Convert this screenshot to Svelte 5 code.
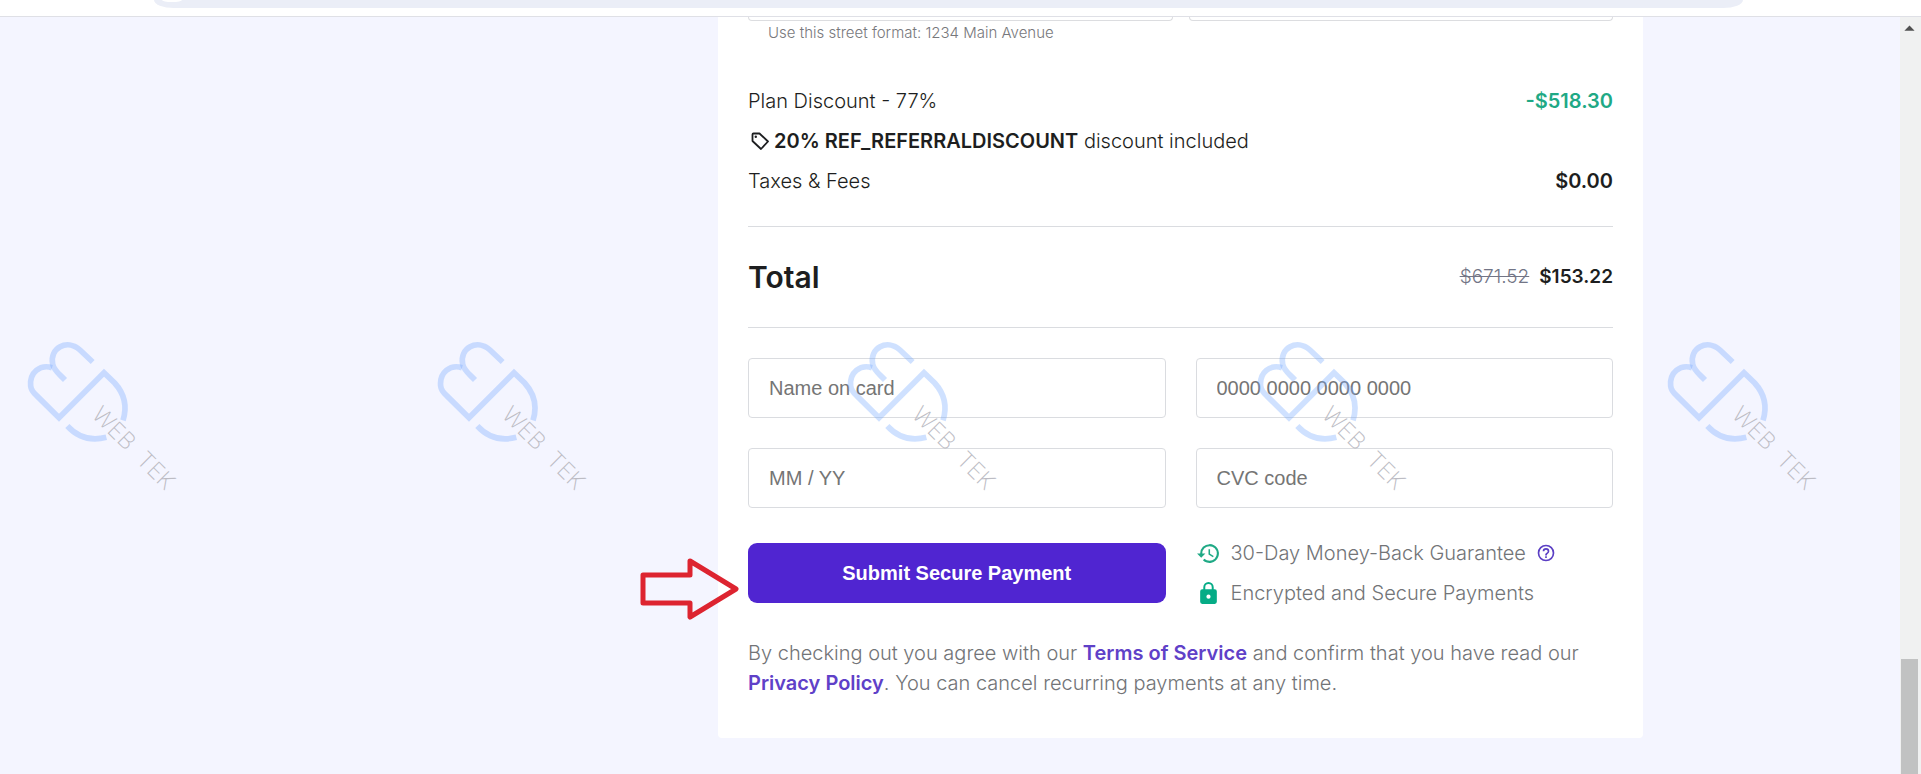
<script>
  const marks = [0, 1, 2, 3, 4];
</script>

<div class="window">
  <div class="toolbar"><div class="address"></div></div>
  <div class="viewport">
    <main class="page">
      <section class="card">
        <div class="street">
          <div class="clipped"></div>
          <div class="clipped"></div>
        </div>
        <p class="hint">Use this street format: 1234 Main Avenue</p>

        <div class="summary">
          <div class="row"><span>Plan Discount - 77%</span><strong class="saving">-$518.30</strong></div>
          <div class="row">
            <span class="coupon">
              <svg class="tag" viewBox="0 0 22 20" aria-hidden="true">
                <path d="M5.500 2.500H11.500L20 10.500 13 18 4.500 10V3.500Q4.500 2.500 5.500 2.500z" fill="none" stroke="#1d1e20" stroke-width="1.800" stroke-linejoin="round" />
                <circle cx="7.800" cy="5.800" r="1.200" fill="#1d1e20" />
              </svg>
              <span><strong>20% REF_REFERRALDISCOUNT</strong> discount included</span>
            </span>
          </div>
          <div class="row"><span>Taxes &amp; Fees</span><strong>$0.00</strong></div>
        </div>

        <div class="total">
          <h2>Total</h2>
          <div class="price"><s>$671.52</s><strong>$153.22</strong></div>
        </div>

        <form class="payment" onsubmit={(e) => e.preventDefault()}>
          <input aria-label="Name on card" placeholder="Name on card" />
          <input aria-label="Card number" placeholder="0000 0000 0000 0000" />
          <input aria-label="Expiry date" placeholder="MM / YY" />
          <input aria-label="CVC code" placeholder="CVC code" />
          <div class="submit">
            <button type="submit">Submit Secure Payment</button>
            <svg class="arrow" viewBox="0 0 100 62" aria-hidden="true">
              <path d="M3 17H50V3L96 31 50 59V45H3Z" fill="none" stroke="#dd2430" stroke-width="5" stroke-linejoin="round" />
            </svg>
          </div>
          <ul class="assurance">
            <li>
              <svg class="badge" viewBox="0 0 24 24" aria-hidden="true">
                <path fill="#1fa985" d="M13 3a9 9 0 0 0-9 9H1l4 4 4-4H6a7 7 0 1 1 7 7 7 7 0 0 1-4.940-2.060l-1.420 1.420A9 9 0 1 0 13 3zm-1 5v5l4.280 2.540.720-1.210-3.500-2.080V8H12z" />
              </svg>
              <span>30-Day Money-Back Guarantee</span>
              <svg class="help" viewBox="0 0 24 24" aria-hidden="true">
                <path fill="#5b3fc4" d="M11 18h2v-2h-2v2zm1-16a10 10 0 1 0 0 20 10 10 0 0 0 0-20zm0 18a8 8 0 1 1 0-16 8 8 0 0 1 0 16zm0-14a4 4 0 0 0-4 4h2a2 2 0 1 1 4 0c0 2-3 1.750-3 5h2c0-2.250 3-2.500 3-5a4 4 0 0 0-4-4z" />
              </svg>
            </li>
            <li>
              <svg class="badge" viewBox="0 0 24 24" aria-hidden="true">
                <path fill="#05ac86" d="M18 8h-1V6A5 5 0 0 0 7 6v2H6a2 2 0 0 0-2 2v10a2 2 0 0 0 2 2h12a2 2 0 0 0 2-2V10a2 2 0 0 0-2-2zM8.900 6a3.100 3.100 0 0 1 6.200 0v2H8.900z" />
                <circle cx="12" cy="15" r="2" fill="#fff" />
              </svg>
              <span>Encrypted and Secure Payments</span>
            </li>
          </ul>
        </form>

        <p class="terms">
          By checking out you agree with our <a href="#terms">Terms of Service</a> and confirm that you have read our
          <a href="#privacy">Privacy Policy</a>. You can cancel recurring payments at any time.
        </p>
      </section>
    </main>
    <div class="scrollbar">
      <svg viewBox="0 0 20 10" aria-hidden="true"><path d="M4 9 10 3l6 6z" fill="#505050" /></svg>
      <div class="thumb"></div>
    </div>
  </div>

  <div class="watermarks" aria-hidden="true">
    {#each marks as mark (mark)}
      <svg viewBox="0 0 600 570">
        <g fill="none" stroke="#72a6ff" stroke-opacity="0.34" stroke-width="17">
          <path d="M278 126 240 90C200 54 148 86 158 132C162 152 176 160 195 180" />
          <path d="M156 143C120 132 88 158 92 198C93 210 100 218 110 227L177 293 312 158 344 189C372 220 382 260 369 301" />
          <path d="M202 318C235 354 272 364 319 352" />
        </g>
        <g class="brand">
          <text transform="translate(272 288) rotate(45)">WEB</text>
          <text transform="translate(406 424) rotate(45)">TEK</text>
        </g>
      </svg>
    {/each}
  </div>
</div>

<style>
  :global(body) {
    margin: 0;
  }

  * {
    box-sizing: border-box;
  }

  .window {
    position: relative;
    display: flex;
    flex-direction: column;
    min-height: 100vh;
    overflow: hidden;
    background: #f4f5ff;
    color: #1d1e20;
    font: 300 20px/30px Inter, sans-serif;
  }

  .toolbar {
    height: 17px;
    padding: 0 178px 0 154px;
    background: #fff;
    border-bottom: 1px solid #dfe0e6;
  }

  .address {
    height: 8px;
    padding-left: 8px;
    border-radius: 0 0 20px 20px / 0 0 8px 8px;
    background: #ebeef7;
  }

  .address::before {
    content: "";
    display: block;
    width: 20px;
    height: 2px;
    border-radius: 0 0 10px 10px / 0 0 2px 2px;
    background: #fff;
  }

  .viewport {
    display: flex;
    flex: 1;
  }

  .page {
    display: grid;
    flex: 1;
    grid-template-columns: 718fr 925fr 257fr;
    align-items: start;
  }

  .card {
    grid-column: 2;
    padding: 0 30px 40px;
    border-radius: 0 0 4px 4px;
    background: #fff;
  }

  .street {
    display: grid;
    grid-template-columns: 1fr 1fr;
    gap: 16px;
  }

  .clipped {
    height: 4px;
    border: 1px solid #dcdde0;
    border-top: 0;
    border-radius: 0 0 4px 4px;
  }

  .hint {
    margin: 2px 0 0 20px;
    color: #77787c;
    font-size: 15px;
    line-height: 20px;
  }

  .summary {
    display: grid;
    gap: 10px;
    margin-top: 43px;
    padding-bottom: 30px;
    border-bottom: 1px solid #dadce0;
  }

  .row,
  .total {
    display: flex;
    align-items: center;
    justify-content: space-between;
  }

  strong {
    font-weight: 600;
  }

  .saving {
    color: #1fa985;
  }

  .coupon {
    display: flex;
    align-items: center;
    gap: 4px;
  }

  .tag {
    width: 22px;
    height: 20px;
  }

  .total {
    height: 101px;
    border-bottom: 1px solid #dadce0;
  }

  h2 {
    margin: 0;
    font-size: 30px;
    font-weight: 600;
  }

  .price {
    display: flex;
    gap: 10px;
    font-size: 19px;
  }

  s {
    color: #727586;
  }

  .payment {
    display: grid;
    grid-template-columns: 1fr 1fr;
    gap: 30px;
    margin-top: 30px;
  }

  input {
    width: 100%;
    min-width: 0;
    height: 60px;
    padding: 0 20px;
    border: 1px solid #dadce0;
    border-radius: 4px;
    background: #fff;
    font: 20px "Liberation Sans", sans-serif;
  }

  input::placeholder {
    color: #757575;
    opacity: 1;
  }

  .submit {
    position: relative;
    padding-top: 5px;
  }

  button {
    width: 100%;
    height: 60px;
    border: 0;
    border-radius: 9px;
    background: #5025d1;
    color: #fff;
    font: bold 20px "Liberation Sans", sans-serif;
  }

  .arrow {
    position: absolute;
    top: 20px;
    left: -108px;
    width: 100px;
    height: 62px;
  }

  .assurance {
    display: grid;
    align-content: start;
    gap: 10px;
    margin: 0;
    padding: 0;
    color: #727477;
    list-style: none;
  }

  li {
    display: flex;
    align-items: center;
    gap: 10px;
  }

  .badge {
    width: 25px;
    height: 25px;
  }

  .help {
    width: 20px;
    height: 20px;
  }

  .terms {
    margin: 30px 0 0;
    color: #727477;
  }

  a {
    color: #5f41c8;
    font-weight: 600;
    text-decoration: none;
  }

  .scrollbar {
    display: flex;
    flex-direction: column;
    justify-content: space-between;
    width: 21px;
    padding: 6px 3px 0 1px;
    background: #f0f1f1;
  }

  .thumb {
    height: 115px;
    background: #c1c2c2;
  }

  .watermarks {
    position: absolute;
    top: 320px;
    left: 0;
    display: flex;
    gap: 210px;
    pointer-events: none;
  }

  .watermarks svg {
    flex: none;
    width: 200px;
    height: 190px;
  }

  .brand {
    fill: #bcbcc4;
    font: 200 69px Inter, sans-serif;
  }
</style>
